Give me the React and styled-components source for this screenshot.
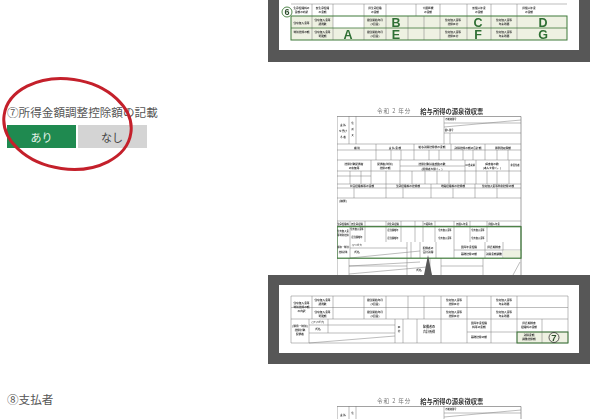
import React from 'react';
import styled, { createGlobalStyle } from 'styled-components';

const LINE = '#7a7a7a';
const GREEN = '#3f7a3a';
const PALE = '#eef1e2';

const GlobalStyle = createGlobalStyle`
  html, body {
    margin: 0;
    padding: 0;
    background: #fff;
  }
  body {
    font-family: "Noto Sans CJK JP", "Noto Sans", sans-serif;
  }
`;

const Page = styled.div`
  width: 600px;
  height: 419px;
  overflow: hidden;
  display: flex;
  flex-direction: column;
`;

const Section = styled.section`
  position: relative;
  display: grid;
  grid-template-columns: 268px 322px;
  margin-top: ${({ $gap }) => $gap}px;
`;

const Side = styled.div`
  padding-left: 7px;
  display: flex;
  flex-direction: column;
`;

const Heading = styled.h3`
  margin: 0 0 6px;
  font-size: 11.6px;
  line-height: 14px;
  font-weight: 400;
  color: #555;
  white-space: nowrap;
`;

const Toggle = styled.div`
  display: flex;
  gap: 1.5px;
`;

const ToggleButton = styled.div`
  width: 69px;
  height: 23px;
  display: flex;
  align-items: center;
  justify-content: center;
  font-size: 11px;
  background: ${({ $active }) => ($active ? '#1f8a50' : '#d4d4d4')};
  color: ${({ $active }) => ($active ? '#e8f5ec' : '#444')};
`;

const Ring = styled.svg`
  position: absolute;
  left: 0;
  top: -32px;
  width: 140px;
  height: 100px;
  overflow: visible;
  pointer-events: none;
`;

const Figure = styled.div`
  display: flex;
  flex-direction: column;
  padding-top: ${({ $top }) => $top}px;
`;

const FormTitle = styled.div`
  height: 10px;
  margin-left: 109px;
  display: flex;
  align-items: center;
  gap: 9px;
  white-space: nowrap;
  filter: blur(0.25px);
`;

const Year = styled.span`
  font-size: 5.6px;
  letter-spacing: 0.9px;
  color: #777;
  font-family: "Noto Sans CJK JP", serif;
`;

const Name = styled.span`
  font-size: 6.3px;
  font-weight: 700;
  color: #333;
`;

const SheetSvg = styled.svg`
  display: block;
  width: 185px;
  height: ${({ $h }) => $h}px;
  margin-left: 69px;
  filter: blur(0.35px);
`;

const Panel = styled.div`
  width: 322px;
  box-sizing: border-box;
  background: #575757;
  padding: ${({ $top }) => $top}px 11px ${({ $bottom }) => $bottom}px;
`;

const PanelSheet = styled.svg`
  display: block;
  width: 300px;
  height: ${({ $h }) => $h}px;
  background: #fff;
  filter: blur(0.35px);
`;

// tiny printed captions on the form
const Cap = ({ x, y, children, size = 2.7, fill = '#333' }) => (
  <text x={x} y={y} fontSize={size} fill={fill} textAnchor="middle" fontFamily='"Noto Sans CJK JP", sans-serif' fontWeight="700">
    {children}
  </text>
);

const Lines = ({ d, color = LINE, w = 0.5 }) => <path d={d} fill="none" stroke={color} strokeWidth={w} />;

const vert = (xs, y1, y2) => xs.map((x) => `M${x} ${y1}V${y2}`).join('');
const horz = (ys, x1, x2) => ys.map((y) => `M${x1} ${y}H${x2}`).join('');

const SheetCaptions = () => (
  <>
    <Cap x={6} y={16}>を受け</Cap>
    <Cap x={6} y={22}>る 者</Cap>
    <Cap x={15.5} y={14} size={2.2}>所</Cap>
    <Cap x={15.5} y={20} size={2.2}>又</Cap>
    <Cap x={112} y={15} size={2.2}>個人番号</Cap>
    <Cap x={20} y={32.5}>種 別</Cap>
    <Cap x={58} y={32.5}>支 払 金 額</Cap>
    <Cap x={95} y={32}>給与所得控除後の金額</Cap>
    <Cap x={131} y={32.5}>所得控除の額の合計額</Cap>
    <Cap x={166} y={32.5}>源泉徴収税額</Cap>
    <Cap x={17} y={49}>控除対象配偶者</Cap>
    <Cap x={17} y={53}>の有無等</Cap>
    <Cap x={48} y={49}>配偶者(特別)</Cap>
    <Cap x={48} y={53}>控除の額</Cap>
    <Cap x={95} y={49}>控除対象扶養親族の数</Cap>
    <Cap x={95} y={54}>(配偶者を除く。)</Cap>
    <Cap x={133} y={50} size={2.3}>16歳未満</Cap>
    <Cap x={155} y={49}>障害者の数</Cap>
    <Cap x={155} y={53}>(本人を除く。)</Cap>
    <Cap x={178} y={50} size={2.3}>非居住者</Cap>
    <Cap x={25} y={71}>社会保険料等の金額</Cap>
    <Cap x={71} y={71}>生命保険料の控除額</Cap>
    <Cap x={116} y={71}>地震保険料の控除額</Cap>
    <Cap x={161} y={71}>住宅借入金等特別控除の額</Cap>
    <Cap x={6} y={86}>(摘要)</Cap>
    <Cap x={6} y={108.5} size={2.3}>生命保険料</Cap>
    <Cap x={20} y={108.5} size={2.3}>新生命保険</Cap>
    <Cap x={56} y={108.5} size={2.3}>旧生命保険</Cap>
    <Cap x={91} y={108.5} size={2.3}>介護医療</Cap>
    <Cap x={125} y={108.5} size={2.3}>新個人年金</Cap>
    <Cap x={157} y={108.5} size={2.3}>旧個人年金</Cap>
    <Cap x={6} y={116} size={2.3}>住宅借入金</Cap>
    <Cap x={6} y={120} size={2.3}>等特別控除</Cap>
    <Cap x={20} y={114} size={2.2}>住宅借入金等</Cap>
    <Cap x={20} y={122} size={2.2}>居住開始年</Cap>
    <Cap x={56} y={115} size={2.2}>居住開始年</Cap>
    <Cap x={56} y={123} size={2.2}>居住開始年</Cap>
    <Cap x={108} y={115} size={2.2}>住宅借入金等</Cap>
    <Cap x={108} y={123} size={2.2}>住宅借入金等</Cap>
    <Cap x={141} y={115} size={2.2}>住宅借入金等</Cap>
    <Cap x={141} y={123} size={2.2}>住宅借入金等</Cap>
    <Cap x={6} y={132} size={2.2}>(源泉・特別)</Cap>
    <Cap x={6} y={137} size={2.2}>控除対象</Cap>
    <Cap x={20} y={130} size={2.2}>(フリガナ)</Cap>
    <Cap x={20} y={137}>氏名</Cap>
    <Cap x={91} y={133}>配偶者の</Cap>
    <Cap x={91} y={137}>合計所得</Cap>
    <Cap x={132} y={132}>国民年金保険</Cap>
    <Cap x={132} y={139}>基礎控除の額</Cap>
    <Cap x={157} y={132}>旧長期損害</Cap>
    <Cap x={157} y={139}>所得金額調整</Cap>
    <Cap x={82} y={155}>氏名</Cap>
  </>
);

const Sheet = ({ cropped = false, pointer = false, height = 159 }) => (
  <SheetSvg $h={height} viewBox={`0 0 185 ${height}`}>
    <Lines d="M0 .5H184V159M0 .5V159" w={0.7} />
    <Lines d={vert([12, 19], 0, 28) + vert([107], 0, 28) + vert([113], 17, 28) + horz([7], 107, 184) + horz([17], 107, 184) + 'M107 11L184 4'} />
    <Cap x={6} y={10}>支 払</Cap>
    <Cap x={15.5} y={8} size={2.2}>住</Cap>
    <Cap x={114} y={4} size={2.2}>受給者番号</Cap>
    {!cropped && (
      <>
        <Lines d={horz([28, 34, 44, 55, 68, 72, 82, 105, 110], 0, 184)} />
        <Lines d={vert([39, 77, 114, 148], 28, 44) + vert([54, 64, 92, 102, 126, 136, 160, 171], 34, 44)} />
        <Lines d={vert([34, 63, 128, 139, 172], 44, 68) + vert([13, 24, 49, 75, 88, 100, 112, 150, 160], 55, 68) + horz([60], 0, 34) + horz([50], 63, 128)} />
        <Lines d={vert([49, 94, 138], 68, 82) + vert([17, 66, 116, 160], 72, 82)} />
        <Lines d={vert([13, 28, 49, 64, 78, 86, 98, 117, 133, 150], 105, 126)} />
        <Lines d={vert([13, 70, 74, 83, 99, 117, 148, 166], 126, 142) + horz([134], 117, 184) + horz([132], 13, 70) + 'M13 142L83 135'} />
        <Lines d={vert([12, 70, 93, 104, 146], 142, 159) + horz([150], 12, 70) + 'M12 150L83 146M12 158L90 151M176 159L183 146' + horz([150], 104, 146)} />
        <rect x="166" y="134.5" width="18" height="7" fill={PALE} />
        <rect x="0" y="110.7" width="184" height="31.5" fill="none" stroke={GREEN} strokeWidth="1.2" />
        <SheetCaptions />
      </>
    )}
    {pointer && <polygon points="91,139 87,159 95,159" fill="#575757" />}
  </SheetSvg>
);

const Letter = ({ x, y, children }) => (
  <text x={x} y={y} fontSize="12.5" fontWeight="700" fill="#2f6f34" textAnchor="middle" fontFamily='"Liberation Sans", sans-serif'>
    {children}
  </text>
);

const TopTable = () => (
  <PanelSheet $h={50} viewBox="0 0 300 50">
    <g transform="translate(12 0)">
      <rect x="0" y="16" width="276" height="24" fill={PALE} />
      <rect x="42" y="16" width="31" height="12" fill="#fff" />
      <rect x="0" y="4" width="276" height="12" fill="#fff" />
      <Lines d={horz([4], 0, 276) + 'M21 4V40M42 4V40M73 4V40M95 4V40M125 4V16M149 4V40M176 4V40M200 4V40M226 4V40'} />
      <Lines d={vert([117, 133], 16, 40)} />
      <rect x="0" y="16" width="276" height="24" fill="none" stroke={GREEN} strokeWidth="1" />
      <Lines d={horz([28], 0, 276)} color={GREEN} w={0.8} />
      <Cap x={10.5} y={9}>生命保険料の</Cap>
      <Cap x={10.5} y={13}>金額の内訳</Cap>
      <Cap x={31.5} y={9}>新生命保険</Cap>
      <Cap x={31.5} y={13}>の金額</Cap>
      <Cap x={84} y={9}>旧生命保険</Cap>
      <Cap x={84} y={13}>の金額</Cap>
      <Cap x={137} y={9}>介護医療</Cap>
      <Cap x={137} y={13}>の金額</Cap>
      <Cap x={188} y={9}>新個人年金</Cap>
      <Cap x={188} y={13}>の金額</Cap>
      <Cap x={238} y={9}>旧個人年金</Cap>
      <Cap x={238} y={13}>の金額</Cap>
      <Cap x={10.5} y={24}>住宅借入金等</Cap>
      <Cap x={10.5} y={33}>特別控除の額</Cap>
      <Cap x={31.5} y={21}>住宅借入金等</Cap>
      <Cap x={31.5} y={25}>適用数</Cap>
      <Cap x={31.5} y={33}>住宅借入金等</Cap>
      <Cap x={31.5} y={37}>可能額</Cap>
      <Cap x={84} y={21}>居住開始年月</Cap>
      <Cap x={84} y={25}>(1回目)</Cap>
      <Cap x={84} y={33}>居住開始年月</Cap>
      <Cap x={84} y={37}>(2回目)</Cap>
      <Cap x={162} y={21}>住宅借入金等</Cap>
      <Cap x={162} y={25}>控除区分</Cap>
      <Cap x={162} y={33}>住宅借入金等</Cap>
      <Cap x={162} y={37}>控除区分</Cap>
      <Cap x={213} y={21}>住宅借入金等</Cap>
      <Cap x={213} y={25}>年末残高</Cap>
      <Cap x={213} y={33}>住宅借入金等</Cap>
      <Cap x={213} y={37}>年末残高</Cap>
      <Letter x={57} y={39}>A</Letter>
      <Letter x={105} y={27}>B</Letter>
      <Letter x={105} y={38.5}>E</Letter>
      <Letter x={187} y={27}>C</Letter>
      <Letter x={187} y={38.5}>F</Letter>
      <Letter x={252} y={27}>D</Letter>
      <Letter x={252} y={38.5}>G</Letter>
      <circle cx="-4" cy="12" r="5" fill="#fff" stroke={GREEN} strokeWidth="0.9" />
      <text x="-4" y="15.2" fontSize="9" fontWeight="700" fill="#2f4f2f" textAnchor="middle" fontFamily='"Liberation Sans", sans-serif'>6</text>
    </g>
  </PanelSheet>
);

const BottomTable = () => (
  <PanelSheet $h={68} viewBox="0 0 300 68">
    <g transform="translate(12 11)">
      <rect x="226" y="36" width="51" height="11" fill={PALE} />
      <Lines d={'M0 0H277V47H0Z' + horz([11.5, 23], 0, 277)} />
      <Lines d={vert([21, 42, 73, 95, 117, 133, 150, 176, 200, 226], 0, 23)} />
      <Lines d={vert([18, 104, 112, 126, 150, 176, 200, 226, 251], 23, 47) + vert([37], 23, 37)} />
      <Lines d={horz([29, 37], 18, 104) + horz([36], 176, 277) + 'M18 47L104 40'} />
      <rect x="226" y="36" width="51" height="11" fill="none" stroke={GREEN} strokeWidth="1" />
      <Cap x={10.5} y={8}>住宅借入金等</Cap>
      <Cap x={10.5} y={12}>特別控除の額</Cap>
      <Cap x={10.5} y={16}>の内訳</Cap>
      <Cap x={31.5} y={5}>住宅借入金等</Cap>
      <Cap x={31.5} y={9}>適用数</Cap>
      <Cap x={31.5} y={17}>住宅借入金等</Cap>
      <Cap x={31.5} y={21}>可能額</Cap>
      <Cap x={84} y={5}>居住開始年月</Cap>
      <Cap x={84} y={9}>(1回目)</Cap>
      <Cap x={84} y={17}>居住開始年月</Cap>
      <Cap x={84} y={21}>(2回目)</Cap>
      <Cap x={163} y={5}>住宅借入金等</Cap>
      <Cap x={163} y={9}>控除区分</Cap>
      <Cap x={163} y={17}>住宅借入金等</Cap>
      <Cap x={163} y={21}>控除区分</Cap>
      <Cap x={213} y={5}>住宅借入金等</Cap>
      <Cap x={213} y={9}>年末残高</Cap>
      <Cap x={213} y={17}>住宅借入金等</Cap>
      <Cap x={213} y={21}>年末残高</Cap>
      <Cap x={9} y={31}>(源泉・特別)</Cap>
      <Cap x={9} y={35}>控除対象</Cap>
      <Cap x={9} y={39}>配偶者</Cap>
      <Cap x={27} y={27}>(フリガナ)</Cap>
      <Cap x={27} y={34}>氏名</Cap>
      <Cap x={108} y={32}>区</Cap>
      <Cap x={108} y={36}>分</Cap>
      <Cap x={138} y={32} size={3}>配偶者の</Cap>
      <Cap x={138} y={37} size={3}>合計所得</Cap>
      <Cap x={188} y={28}>国民年金保険</Cap>
      <Cap x={188} y={32}>料等の金額</Cap>
      <Cap x={188} y={42}>基礎控除の額</Cap>
      <Cap x={238} y={28}>旧長期損害</Cap>
      <Cap x={238} y={32}>保険料の金額</Cap>
      <Cap x={238} y={40}>所得金額</Cap>
      <Cap x={238} y={44}>調整控除額</Cap>
      <circle cx="263" cy="41.5" r="5" fill="none" stroke="#333" strokeWidth="0.8" />
      <text x="263" y="45" fontSize="9.5" fontWeight="700" fill="#2f4f2f" textAnchor="middle" fontFamily='"Liberation Sans", sans-serif'>7</text>
    </g>
  </PanelSheet>
);

const FormCaption = () => (
  <FormTitle>
    <Year>令和 2 年分</Year>
    <Name>給与所得の源泉徴収票</Name>
  </FormTitle>
);

export default function App() {
  return (
    <Page>
      <GlobalStyle />
      <Section $gap={0}>
        <Side />
        <Panel $top={0} $bottom={12}>
          <TopTable />
        </Panel>
      </Section>

      <Section $gap={43}>
        <Side>
          <Heading>⑦所得金額調整控除額の記載</Heading>
          <Toggle>
            <ToggleButton $active>あり</ToggleButton>
            <ToggleButton>なし</ToggleButton>
          </Toggle>
        </Side>
        <Figure $top={1}>
          <FormCaption />
          <Sheet pointer />
          <Panel $top={10} $bottom={11}>
            <BottomTable />
          </Panel>
        </Figure>
        <Ring viewBox="0 0 140 100">
          <ellipse cx="67.5" cy="51" rx="64" ry="45" fill="none" stroke="#c4202b" strokeWidth="3" transform="rotate(8 67.5 51)" />
        </Ring>
      </Section>

      <Section $gap={28}>
        <Side>
          <Heading>⑧支払者</Heading>
        </Side>
        <Figure $top={4}>
          <FormCaption />
          <Sheet cropped height={13} />
        </Figure>
      </Section>
    </Page>
  );
}
